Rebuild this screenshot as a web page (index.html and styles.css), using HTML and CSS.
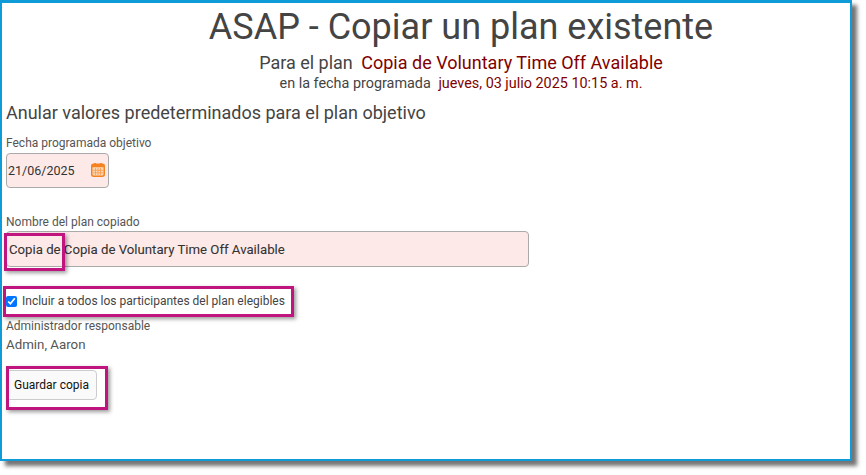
FILE: index.html
```html
<!DOCTYPE html>
<html lang="es">
<head>
<meta charset="utf-8">
<title>ASAP - Copiar un plan existente</title>
<link rel="stylesheet" href="styles.css">
</head>
<body>
<div class="frame">
  <header class="head">
    <h1 class="title">ASAP - Copiar un plan existente</h1>
    <p class="sub">Para el plan <span class="val">Copia de Voluntary Time Off Available</span></p>
    <p class="when">en la fecha programada <span class="val">jueves, 03 julio 2025 10:15 a. m.</span></p>
  </header>
  <h2 class="section">Anular valores predeterminados para el plan objetivo</h2>
  <label class="lbl">Fecha programada objetivo</label>
  <div class="input date">
    <span>21/06/2025</span>
    <svg class="cal" width="14" height="14" viewBox="0 0 14 14" aria-hidden="true">
      <rect x="0.75" y="1.25" width="12.5" height="12" rx="2" fill="#fbd9b8" stroke="#f58220" stroke-width="1.5"/>
      <rect x="0.75" y="1.25" width="12.5" height="3" fill="#f58220"/>
      <rect x="3" y="0" width="2" height="3" rx="0.6" fill="#f58220"/>
      <rect x="9" y="0" width="2" height="3" rx="0.6" fill="#f58220"/>
      <path d="M2 7.3h10M2 9.8h10M4.5 5v7M7 5v7M9.5 5v7" stroke="#f79a4c" stroke-width="0.8"/>
    </svg>
  </div>
  <label class="lbl name-lbl">Nombre del plan copiado</label>
  <div class="input name">Copia de Copia de Voluntary Time Off Available</div>
  <div class="check-row">
    <input type="checkbox" class="check" checked>
    <span>Incluir a todos los participantes del plan elegibles</span>
  </div>
  <label class="lbl admin-lbl">Administrador responsable</label>
  <div class="admin">Admin, Aaron</div>
  <button class="save" type="button">Guardar copia</button>
  <div class="mark mark-a"></div>
  <div class="mark mark-b"></div>
  <div class="mark mark-c"></div>
</div>
</body>
</html>
```
FILE: styles.css
```css
* { box-sizing: border-box; }
html, body { margin: 0; padding: 0; background: #fff; }
body { width: 866px; height: 475px; overflow: hidden; font-family: Roboto, "Liberation Sans", sans-serif; color: #444; }
.frame {
  position: relative;
  width: 852px;
  height: 461px;
  border: solid #0f9bd7;
  border-width: 3px 2px 2px 2px;
  box-shadow: 5px 5px 4px rgba(0,0,0,.55);
  background: #fff;
  padding: 0 4px;
}
.head { padding-left: 70px; text-align: center; }
.title { margin: 0; font-size: 36px; font-weight: 400; line-height: 49px; color: #444; }
.sub { margin: 0; font-size: 18px; line-height: 21px; color: #444; white-space: pre-wrap; }
.when { margin: 1px 0 0; font-size: 14.4px; line-height: 20px; color: #444; white-space: pre-wrap; }
.val { color: #800000; margin-left: 4px; }
.section { margin: 7px 0 0; font-size: 18px; font-weight: 400; line-height: 24px; color: #444; }
.lbl { display: block; font-size: 12px; line-height: 16px; color: #555; }
.section + .lbl { margin-top: 10px; }
.input { background: #fdeae8; border: 1px solid #aaa; border-radius: 4px; color: #333; }
.date { display: flex; align-items: center; justify-content: space-between; width: 103px; height: 35px; margin: 2px 0 0; padding: 0 3px 0 1px; font-size: 12.5px; }
.cal { margin-bottom: 2px; }
.name-lbl { margin-top: 26px; }
.name { display: flex; align-items: center; width: 523px; height: 36px; margin: 1px 0 0; padding: 0 2px; font-size: 13.2px; -webkit-text-stroke: .08px #333; }
.check-row { display: flex; align-items: center; gap: 5px; margin-top: 26px; font-size: 12px; line-height: 16px; color: #444; }
.check { width: 11px; height: 11px; margin: 0; accent-color: #0075ff; }
.admin-lbl { margin-top: 9px; }
.admin { margin-top: 2px; font-size: 13.3px; line-height: 18px; color: #555; }
.save { display: block; margin: 16px 0 0; width: 91px; height: 30px; padding: 0; font: 12px Roboto, sans-serif; color: #111; background: #fafafa; border: 1px solid #ccc; border-radius: 4px; }
.mark { position: absolute; border: 3px solid #c0157f; box-shadow: 2px 2px 4px rgba(0,0,0,.4); }
.mark-a { left: 2px; top: 230px; width: 61px; height: 38px; }
.mark-b { left: 1px; top: 283px; width: 291px; height: 31px; }
.mark-c { left: 4px; top: 363px; width: 102px; height: 44px; }
```
